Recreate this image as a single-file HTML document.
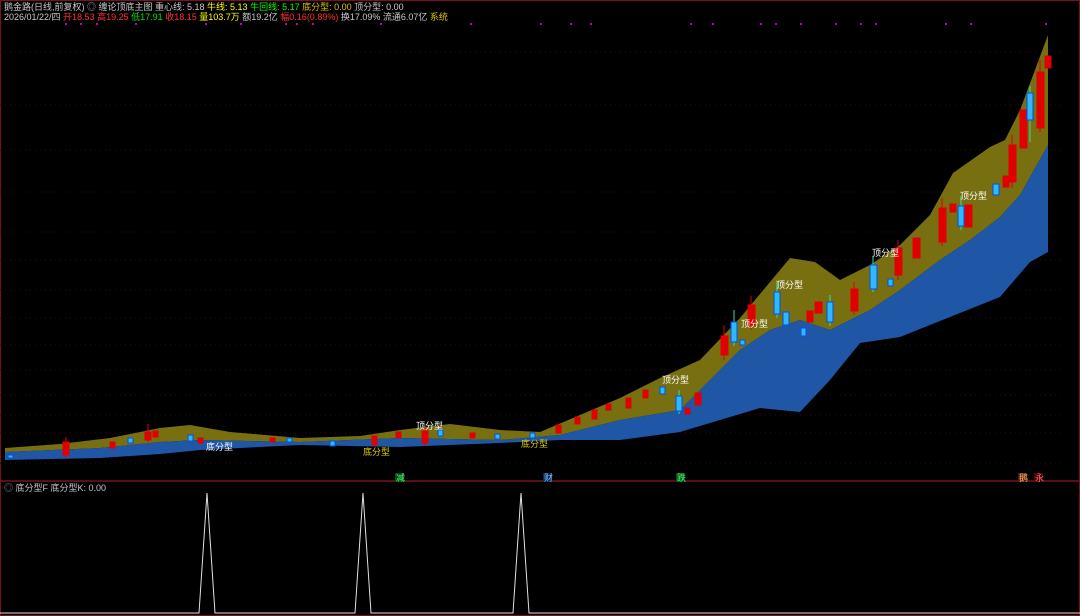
<!DOCTYPE html>
<html><head><meta charset="utf-8"><style>
html,body{margin:0;padding:0;background:#000;width:1080px;height:616px;overflow:hidden}
svg{display:block}
text{font-family:"Liberation Sans","Noto Sans CJK SC",sans-serif;font-size:9px}
</style></head><body>
<svg width="1080" height="616" viewBox="0 0 1080 616" xmlns="http://www.w3.org/2000/svg">
<rect width="1080" height="616" fill="#000"/>
<rect x="0.5" y="0.5" width="1079" height="615" fill="none" stroke="#7a1020" stroke-width="1"/>
<line x1="0" y1="481" x2="1080" y2="481" stroke="#7a1020" stroke-width="1.5"/>
<g stroke="#3a0a0a" stroke-dasharray="1,4" stroke-width="1">
<line x1="0" y1="52" x2="1065" y2="52"/><line x1="0" y1="105" x2="1065" y2="105"/><line x1="0" y1="150" x2="1065" y2="150"/><line x1="0" y1="192" x2="1065" y2="192"/><line x1="0" y1="232" x2="1065" y2="232"/><line x1="0" y1="260" x2="1065" y2="260"/><line x1="0" y1="290" x2="1065" y2="290"/><line x1="0" y1="318" x2="1065" y2="318"/><line x1="0" y1="345" x2="1065" y2="345"/><line x1="0" y1="370" x2="1065" y2="370"/><line x1="0" y1="395" x2="1065" y2="395"/><line x1="0" y1="415" x2="1065" y2="415"/><line x1="0" y1="433" x2="1065" y2="433"/><line x1="0" y1="463" x2="1065" y2="463"/>
</g>
<text x="4" y="10" fill="#c8c8c8">鹅金路(日线,前复权) <tspan fill="#aaa">◎</tspan> 缠论顶底主图 重心线: 5.18 <tspan fill="#ffff00">牛线: 5.13</tspan> <tspan fill="#00ff00">牛回线: 5.17</tspan> <tspan fill="#e0c000">底分型: 0.00</tspan> 顶分型: 0.00</text>
<text x="4" y="20" fill="#c8c8c8">2026/01/22/四 <tspan fill="#ff3030">开18.53</tspan> <tspan fill="#ff3030">高19.25</tspan> <tspan fill="#00e000">低17.91</tspan> <tspan fill="#ff3030">收18.15</tspan> <tspan fill="#ffff00">量103.7万</tspan> 额19.2亿 <tspan fill="#ff3030">幅0.16(0.89%)</tspan> 换17.09% 流通6.07亿 <tspan fill="#e0c000">系统</tspan></text>
<g fill="#c000c0">
<rect x="65" y="23" width="2" height="2"/><rect x="80" y="23" width="2" height="2"/><rect x="96" y="23" width="2" height="2"/><rect x="135" y="23" width="2" height="2"/><rect x="205" y="23" width="2" height="2"/><rect x="240" y="23" width="2" height="2"/><rect x="285" y="23" width="2" height="2"/><rect x="296" y="23" width="2" height="2"/><rect x="312" y="23" width="2" height="2"/><rect x="380" y="23" width="2" height="2"/><rect x="470" y="23" width="2" height="2"/><rect x="540" y="23" width="2" height="2"/><rect x="570" y="23" width="2" height="2"/><rect x="590" y="23" width="2" height="2"/><rect x="690" y="23" width="2" height="2"/><rect x="712" y="23" width="2" height="2"/><rect x="760" y="23" width="2" height="2"/><rect x="775" y="23" width="2" height="2"/><rect x="800" y="23" width="2" height="2"/><rect x="835" y="23" width="2" height="2"/><rect x="860" y="23" width="2" height="2"/><rect x="875" y="23" width="2" height="2"/><rect x="945" y="23" width="2" height="2"/><rect x="970" y="23" width="2" height="2"/><rect x="1045" y="23" width="2" height="2"/>
</g>
<path fill="#787010" d="M5,448 L60,444 110,438 160,428 190,425 230,432 300,438 360,436 400,430 450,424 500,430 540,432 580,415 620,398 660,378 700,360 740,318 770,282 790,258 815,262 840,280 870,265 900,245 930,215 953,173 990,147 1005,140 1020,110 1035,70 1048,35 L1048,145 1020,195 1000,217 970,240 940,260 900,290 870,310 830,330 800,320 770,330 740,350 710,380 680,410 620,420 560,435 500,440 400,438 300,442 200,440 160,442 100,448 5,452 Z"/>
<path fill="#1f56a6" d="M5,452 L100,448 160,442 200,440 300,442 400,438 500,440 560,435 620,420 680,410 710,380 740,350 770,330 800,320 830,330 870,310 900,290 940,260 970,240 1000,217 1020,195 1048,145 L1048,252 1030,262 1000,297 960,313 900,337 860,343 830,380 800,412 760,408 720,420 680,432 620,440 560,440 500,443 400,447 300,445 200,450 160,454 100,458 5,460 Z"/>
<g stroke="#e00000" stroke-width="1">
<line x1="66" y1="437" x2="66" y2="458"/><line x1="148" y1="424" x2="148" y2="442"/><line x1="425" y1="426" x2="425" y2="446"/><line x1="724" y1="325" x2="724" y2="360"/><line x1="751" y1="296" x2="751" y2="330"/><line x1="854" y1="282" x2="854" y2="315"/><line x1="898" y1="240" x2="898" y2="280"/><line x1="942" y1="198" x2="942" y2="246"/><line x1="1012" y1="135" x2="1012" y2="188"/><line x1="1040" y1="60" x2="1040" y2="132"/>
</g>
<g stroke="#30e0a0" stroke-width="1">
<line x1="734" y1="310" x2="734" y2="346"/><line x1="777" y1="282" x2="777" y2="318"/><line x1="830" y1="295" x2="830" y2="326"/><line x1="873" y1="256" x2="873" y2="292"/><line x1="961" y1="196" x2="961" y2="230"/><line x1="1030" y1="86" x2="1030" y2="142"/><line x1="679" y1="390" x2="679" y2="414"/>
</g>
<g stroke-width="1">
<g fill="#e00000" stroke="#e00000">
<rect x="63" y="442" width="6" height="13"/><rect x="110" y="442" width="5" height="6"/><rect x="145" y="432" width="6" height="8"/><rect x="153" y="431" width="5" height="6"/><rect x="198" y="438" width="5" height="5"/><rect x="270" y="438" width="5" height="4"/><rect x="372" y="436" width="5" height="9"/><rect x="396" y="432" width="5" height="6"/><rect x="422" y="431" width="6" height="12"/><rect x="470" y="433" width="5" height="5"/><rect x="556" y="425" width="5" height="8"/><rect x="575" y="417" width="5" height="7"/><rect x="592" y="410" width="5" height="9"/><rect x="606" y="404" width="5" height="6"/><rect x="626" y="398" width="5" height="10"/><rect x="643" y="390" width="5" height="8"/><rect x="685" y="408" width="5" height="6"/><rect x="695" y="393" width="6" height="12"/><rect x="721" y="336" width="7" height="19"/><rect x="748" y="305" width="7" height="20"/><rect x="807" y="311" width="6" height="11"/><rect x="815" y="302" width="7" height="11"/><rect x="851" y="289" width="7" height="22"/><rect x="895" y="248" width="7" height="27"/><rect x="913" y="238" width="7" height="20"/><rect x="939" y="208" width="7" height="34"/><rect x="950" y="204" width="6" height="8"/><rect x="965" y="205" width="7" height="22"/><rect x="1003" y="176" width="6" height="11"/><rect x="1009" y="145" width="7" height="37"/><rect x="1020" y="110" width="7" height="38"/><rect x="1037" y="72" width="7" height="56"/><rect x="1045" y="56" width="6" height="12"/>
</g>
<g fill="#30b8ff" stroke="#0050e0">
<rect x="8" y="455" width="5" height="3"/><rect x="128" y="438" width="5" height="5"/><rect x="188" y="435" width="5" height="6"/><rect x="287" y="438" width="5" height="4"/><rect x="330" y="441" width="5" height="5"/><rect x="438" y="430" width="5" height="6"/><rect x="495" y="434" width="5" height="5"/><rect x="530" y="433" width="5" height="5"/><rect x="660" y="387" width="5" height="7"/><rect x="676" y="396" width="6" height="15"/><rect x="731" y="322" width="6" height="20"/><rect x="740" y="340" width="5" height="5"/><rect x="774" y="292" width="6" height="22"/><rect x="783" y="312" width="6" height="13"/><rect x="801" y="328" width="5" height="8"/><rect x="827" y="302" width="6" height="20"/><rect x="870" y="265" width="7" height="24"/><rect x="888" y="279" width="5" height="7"/><rect x="958" y="206" width="6" height="20"/><rect x="993" y="184" width="6" height="11"/><rect x="1027" y="93" width="6" height="27"/>
</g>
</g>
<g fill="#ffffff" font-size="9">
<text x="206" y="450">底分型</text>
<text x="416" y="429">顶分型</text>
<text x="662" y="383">顶分型</text>
<text x="741" y="327">顶分型</text>
<text x="776" y="288">顶分型</text>
<text x="872" y="256">顶分型</text>
<text x="960" y="199">顶分型</text>
</g>
<g fill="#e0d000">
<text x="363" y="455">底分型</text>
<text x="521" y="447">底分型</text>
</g>
<g font-size="8">
<rect x="395" y="473" width="9" height="9" fill="#0a4a1a"/><text x="396" y="481" fill="#40ff60">减</text>
<rect x="543" y="473" width="9" height="9" fill="#0a2a4a"/><text x="544" y="481" fill="#80c0ff">财</text>
<rect x="676" y="473" width="9" height="9" fill="#0a4a1a"/><text x="677" y="481" fill="#40ff60">跌</text>
<rect x="1018" y="473" width="9" height="9" fill="#4a200a"/><text x="1019" y="481" fill="#ffb060">鹅</text>
<rect x="1034" y="473" width="9" height="9" fill="#4a0a0a"/><text x="1035" y="481" fill="#ff6060">永</text>
</g>
<text x="4" y="491" fill="#c8c8c8"><tspan fill="#888">◎</tspan> 底分型F  底分型K: 0.00</text>
<polyline fill="none" stroke="#e0e0e0" stroke-width="1" points="0,613 199,613 207,493 215,613 355,613 363,493 371,613 513,613 521,493 529,613 1080,613"/>
</svg>
</body></html>
